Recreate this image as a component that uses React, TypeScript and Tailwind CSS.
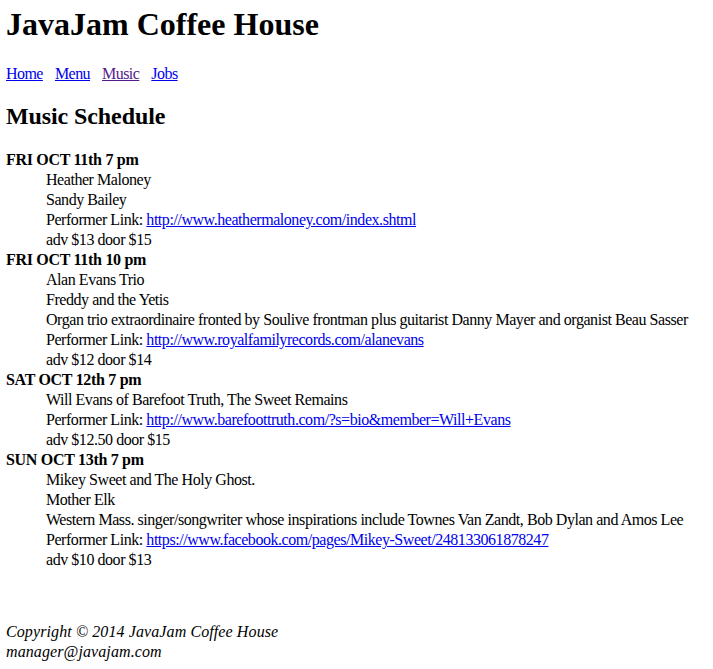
export default function App() {
  const link = "text-[#0000EE] underline";
  const dd = "ml-[40px]";
  return (
    <div className="min-h-screen bg-white px-[6px] pt-[6px] text-black text-[16px] leading-[20px] tracking-[-0.45px] font-['Liberation_Serif','Times_New_Roman',serif]">
      <header>
        <h1 className="text-[32px] font-bold leading-[37px] tracking-normal">JavaJam Coffee House</h1>
      </header>
      <nav className="mt-[21px] flex gap-[12px] tracking-[-0.55px]">
        <a href="#" className={link}>Home</a>
        <a href="#" className={link}>Menu</a>
        <a href="#" className="text-[#551A8B] underline">Music</a>
        <a href="#" className={link}>Jobs</a>
      </nav>
      <main>
        <h2 className="mt-[18px] text-[24px] font-bold leading-[28px] tracking-[-0.1px]">Music Schedule</h2>
        <dl className="mt-[20px]">
          <dt className="font-bold tracking-[-0.3px]">FRI OCT 11th 7 pm</dt>
          <dd className={dd}>Heather Maloney</dd>
          <dd className={dd}>Sandy Bailey</dd>
          <dd className={dd}>
            Performer Link: <a href="#" className={link}>http://www.heathermaloney.com/index.shtml</a>
          </dd>
          <dd className={dd}>adv $13 door $15</dd>

          <dt className="font-bold tracking-[-0.3px]">FRI OCT 11th 10 pm</dt>
          <dd className={dd}>Alan Evans Trio</dd>
          <dd className={dd}>Freddy and the Yetis</dd>
          <dd className={`${dd} whitespace-nowrap`}>
            Organ trio extraordinaire fronted by Soulive frontman plus guitarist Danny Mayer and organist Beau Sasser
          </dd>
          <dd className={dd}>
            Performer Link: <a href="#" className={link}>http://www.royalfamilyrecords.com/alanevans</a>
          </dd>
          <dd className={dd}>adv $12 door $14</dd>

          <dt className="font-bold tracking-[-0.3px]">SAT OCT 12th 7 pm</dt>
          <dd className={dd}>Will Evans of Barefoot Truth, The Sweet Remains</dd>
          <dd className={dd}>
            Performer Link: <a href="#" className={link}>http://www.barefoottruth.com/?s=bio&amp;member=Will+Evans</a>
          </dd>
          <dd className={dd}>adv $12.50 door $15</dd>

          <dt className="font-bold tracking-[-0.3px]">SUN OCT 13th 7 pm</dt>
          <dd className={dd}>Mikey Sweet and The Holy Ghost.</dd>
          <dd className={dd}>Mother Elk</dd>
          <dd className={`${dd} whitespace-nowrap`}>
            Western Mass. singer/songwriter whose inspirations include Townes Van Zandt, Bob Dylan and Amos Lee
          </dd>
          <dd className={dd}>
            Performer Link: <a href="#" className={link}>https://www.facebook.com/pages/Mikey-Sweet/248133061878247</a>
          </dd>
          <dd className={dd}>adv $10 door $13</dd>
        </dl>
      </main>
      <footer className="mt-[52px] italic tracking-[0.1px]">
        <div>Copyright © 2014 JavaJam Coffee House</div>
        <div>manager@javajam.com</div>
      </footer>
    </div>
  );
}
